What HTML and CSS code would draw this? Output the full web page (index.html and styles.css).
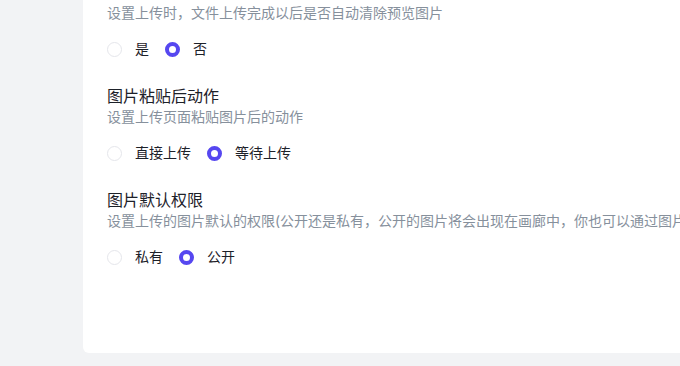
FILE: index.html
```html
<!DOCTYPE html>
<html lang="zh-CN">
<head>
    <meta charset="UTF-8">
    <meta name="viewport" content="width=device-width, initial-scale=1.0">
    <link rel="stylesheet" href="styles.css">
</head>
<body>
    <div class="settings-card">
        <div class="setting-item">
            <div class="setting-desc">设置上传时，文件上传完成以后是否自动清除预览图片</div>
            <div class="radio-group">
                <label class="radio">
                    <span class="radio-icon"></span>
                    <span class="radio-label">是</span>
                </label>
                <label class="radio checked">
                    <span class="radio-icon"></span>
                    <span class="radio-label">否</span>
                </label>
            </div>
        </div>

        <div class="setting-item">
            <div class="setting-title">图片粘贴后动作</div>
            <div class="setting-desc">设置上传页面粘贴图片后的动作</div>
            <div class="radio-group">
                <label class="radio">
                    <span class="radio-icon"></span>
                    <span class="radio-label">直接上传</span>
                </label>
                <label class="radio checked">
                    <span class="radio-icon"></span>
                    <span class="radio-label">等待上传</span>
                </label>
            </div>
        </div>

        <div class="setting-item">
            <div class="setting-title">图片默认权限</div>
            <div class="setting-desc">设置上传的图片默认的权限(公开还是私有，公开的图片将会出现在画廊中，你也可以通过图片</div>
            <div class="radio-group">
                <label class="radio">
                    <span class="radio-icon"></span>
                    <span class="radio-label">私有</span>
                </label>
                <label class="radio checked">
                    <span class="radio-icon"></span>
                    <span class="radio-label">公开</span>
                </label>
            </div>
        </div>
    </div>
</body>
</html>
```

FILE: styles.css
```css
html, body {
    margin: 0;
    padding: 0;
    overflow: hidden;
}

body {
    background-color: #f2f3f5;
    font-family: "Inter", "Noto Sans CJK SC", sans-serif;
    color: #1d2129;
    height: 366px;
}

/* page is scrolled down, the top of the card is out of view */
.settings-card {
    margin-left: 83px;
    width: 900px;
    background: white;
    border-radius: 0 0 6px 6px;
    padding: 3px 24px 86px 24px;
    display: flex;
    flex-direction: column;
    gap: 26px;
}

.setting-title {
    font-size: 16px;
    line-height: 22px;
    color: #1d2129;
}

.setting-desc {
    font-size: 14px;
    line-height: 20px;
    color: #86909c;
    white-space: nowrap;
}

.radio-group {
    margin-top: 16px;
    display: flex;
    align-items: center;
    height: 20px;
}

.radio {
    display: flex;
    align-items: center;
    margin-right: 16px;
    cursor: pointer;
}

.radio-icon {
    box-sizing: border-box;
    width: 15px;
    height: 15px;
    border-radius: 50%;
    border: 1px solid #e5e6eb;
    margin-right: 13px;
}

.radio.checked .radio-icon {
    border: 4px solid #5647f0;
    background: white;
}

.radio-label {
    font-size: 14px;
    line-height: 20px;
    color: #1d2129;
}
```
